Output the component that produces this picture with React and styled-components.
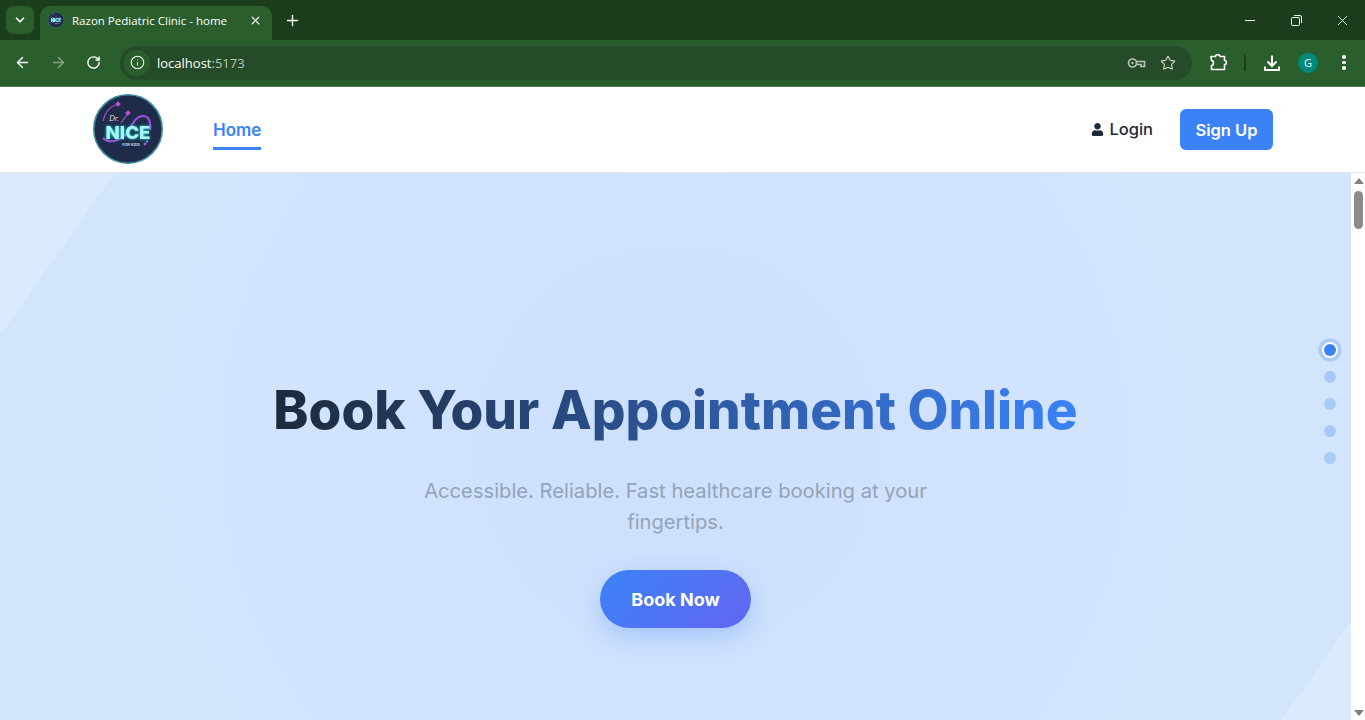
import styled, { createGlobalStyle } from "styled-components"
import { ArrowLeft, ArrowRight, RotateCw, Info, Star, X, Plus, ChevronDown } from "lucide-react"
import { FaUser } from "react-icons/fa"

const GlobalStyle = createGlobalStyle`
html, body {
    margin: 0;
    padding: 0;
    height: 720px;
    overflow: hidden;
    background: #fff;
}
* { box-sizing: border-box; }
`

function Logo({ size }) {
    return (
        <svg width={size} height={size} viewBox="0 0 70 70">
            <circle cx="35" cy="35" r="34.200" fill="#1f2c49" stroke="#3f8d9c" strokeWidth="1.600" />
            <path d="M25 10 C18 12 12 18 10 27" fill="none" stroke="#a24bd0" strokeWidth="1.200" />
            <path d="M35 19 C33 23 30 26 28 29" fill="none" stroke="#a24bd0" strokeWidth="1.200" />
            <path d="M10 44 C16 50 28 48 36 36 C41 27 44 22 50 22 C56 22 58 28 57 36" fill="none" stroke="#9c4fdc" strokeWidth="2.200" />
            <rect x="23" y="8" width="4" height="4" fill="#c04fd8" transform="rotate(45 25 10)" />
            <rect x="33" y="17" width="4" height="4" fill="#c04fd8" transform="rotate(45 35 19)" />
            <StethoText x="16" y="27" fontSize="8">Dr.</StethoText>
            <NiceText x="35" y="45" textAnchor="middle" fontSize="18" textLength="45" lengthAdjust="spacingAndGlyphs">NICE</NiceText>
            <KidsText x="38" y="51.500" textAnchor="middle" fontSize="3.800">FOR KIDS</KidsText>
            <circle cx="52" cy="50" r="1.400" fill="#c04fd8" />
            <circle cx="54" cy="47.500" r="1" fill="#35e6e6" />
        </svg>
    )
}

function KeyIcon() {
    return (
        <svg width="19" height="12" viewBox="0 0 19 12" fill="none" stroke="#b9c4b9" strokeWidth="1.600">
            <circle cx="5.500" cy="6" r="4" />
            <circle cx="5.500" cy="6" r="1.200" fill="#b9c4b9" stroke="none" />
            <path d="M9.500 4.500H17.500V9.500H14V7.500H9.500" />
        </svg>
    )
}

function ExtensionIcon() {
    return (
        <svg width="17" height="17" viewBox="0 0 17 17" fill="none" stroke="#fff" strokeWidth="1.600" strokeLinejoin="round">
            <path d="M1 2.500H5.500C5.500 0 10 0 10 2.500H14.500V6.500C17 6.500 17 10.500 14.500 10.500V15.500H1.500V11.500C4 11.500 4 6.500 1.500 6.500Z" />
        </svg>
    )
}

function DownloadIcon() {
    return (
        <svg width="16" height="16" viewBox="0 0 16 16" fill="none" stroke="#fff" strokeWidth="2">
            <path d="M8 0.500V11M3.500 6.500L8 11L12.500 6.500M1 11.500V15H15V11.500" />
        </svg>
    )
}

function MinimizeIcon() {
    return (
        <svg width="10" height="1" viewBox="0 0 10 1">
            <rect width="10" height="1" fill="#fff" />
        </svg>
    )
}

function RestoreIcon() {
    return (
        <svg width="11" height="11" viewBox="0 0 11 11" fill="none" stroke="#fff" strokeWidth="1">
            <rect x="0.500" y="2.500" width="8" height="8" rx="1.200" />
            <path d="M3 .5H9A1.500 1.500 0 0 1 10.500 2V8" />
        </svg>
    )
}

export default function App() {
    return (
        <Screen>
            <GlobalStyle />

            <TabStrip>
                <TabMenu><ChevronDown size={14} strokeWidth={3} color="#fff" /></TabMenu>
                <Tab>
                    <Logo size={16} />
                    <TabTitle>Razon Pediatric Clinic - home</TabTitle>
                    <X size={13} strokeWidth={2.200} color="#fff" />
                </Tab>
                <NewTab><Plus size={17} strokeWidth={2} color="#fff" /></NewTab>
                <WindowControls>
                    <WindowButton><MinimizeIcon /></WindowButton>
                    <WindowButton><RestoreIcon /></WindowButton>
                    <WindowButton><X size={17} strokeWidth={1.200} color="#fff" /></WindowButton>
                </WindowControls>
            </TabStrip>

            <Toolbar>
                <NavIcons>
                    <ArrowLeft size={17} strokeWidth={2} color="#fff" />
                    <ArrowRight size={17} strokeWidth={2} color="#86a587" />
                    <RotateCw size={15} strokeWidth={2.200} color="#fff" />
                </NavIcons>
                <Omnibox>
                    <SiteInfo><Info size={15} strokeWidth={1.700} color="#fff" /></SiteInfo>
                    <Url>localhost<UrlPort>:5173</UrlPort></Url>
                    <OmniActions>
                        <KeyIcon />
                        <Star size={16} strokeWidth={1.700} color="#c6d0c6" />
                    </OmniActions>
                </Omnibox>
                <ToolActions>
                    <ExtensionIcon />
                    <Divider />
                    <DownloadIcon />
                    <Avatar>G</Avatar>
                    <Dots><i /><i /><i /></Dots>
                </ToolActions>
            </Toolbar>

            <Navbar>
                <NavLeft>
                    <Logo size={70} />
                    <HomeLink>Home</HomeLink>
                </NavLeft>
                <NavRight>
                    <LoginLink><FaUser size={13} color="#1e293b" />Login</LoginLink>
                    <SignUp>Sign Up</SignUp>
                </NavRight>
            </Navbar>

            <Body>
                <Hero>
                    <Title>Book Your Appointment Online</Title>
                    <Subtitle>Accessible. Reliable. Fast healthcare booking at your fingertips.</Subtitle>
                    <BookButton>Book Now</BookButton>
                    <SectionDots>
                        <SectionDot $active />
                        <SectionDot />
                        <SectionDot />
                        <SectionDot />
                        <SectionDot />
                    </SectionDots>
                </Hero>
                <Scrollbar>
                    <ArrowUp />
                    <Thumb />
                    <ArrowDown />
                </Scrollbar>
            </Body>
        </Screen>
    )
}

const Screen = styled.div`
width: 1365px;
height: 720px;
display: flex;
flex-direction: column;
overflow: hidden;
font-family: 'Inter', 'Open Sans', sans-serif;
`

const StethoText = styled.text`
font-family: 'Liberation Serif', serif;
font-style: italic;
fill: #d7dbe6;
`

const NiceText = styled.text`
font-family: 'Inter', sans-serif;
font-weight: 800;
fill: #a6f7f2;
filter: drop-shadow(0 0 1.500px #20e0e0);
`

const KidsText = styled.text`
font-family: 'Inter', sans-serif;
font-weight: 700;
fill: #cfd6e2;
`

const TabStrip = styled.div`
height: 40px;
flex-shrink: 0;
background: #1b3d1c;
display: flex;
align-items: flex-end;
padding-left: 6px;
`

const TabMenu = styled.div`
width: 28px;
height: 28px;
margin-bottom: 6px;
border-radius: 8px;
background: #2a5e2c;
display: flex;
align-items: center;
justify-content: center;
`

const Tab = styled.div`
width: 232px;
height: 34px;
margin-left: 6px;
padding: 0 10px 6px 8px;
border-radius: 10px 10px 0 0;
background: #2a5e2c;
display: flex;
align-items: center;
gap: 8px;
`

const TabTitle = styled.span`
flex: 1;
font-family: 'Open Sans', sans-serif;
font-size: 11.500px;
color: #fff;
white-space: nowrap;
`

const NewTab = styled.div`
width: 28px;
height: 28px;
margin: 0 0 6px 6px;
display: flex;
align-items: center;
justify-content: center;
`

const WindowControls = styled.div`
margin-left: auto;
height: 40px;
display: flex;
align-items: center;
`

const WindowButton = styled.div`
width: 46px;
height: 40px;
display: flex;
align-items: center;
justify-content: center;
`

const Toolbar = styled.div`
height: 47px;
flex-shrink: 0;
background: #2a5e2c;
border-bottom: 1px solid #4b7a4c;
display: flex;
align-items: center;
padding: 0 12px 1px 14px;
`

const NavIcons = styled.div`
width: 106px;
display: flex;
align-items: center;
gap: 19px;
`

const Omnibox = styled.div`
width: 1072px;
height: 34px;
border-radius: 17px;
background: #264b29;
display: flex;
align-items: center;
padding: 0 16px 0 4px;
`

const SiteInfo = styled.div`
width: 26px;
height: 26px;
border-radius: 50%;
background: #2a5e2c;
display: flex;
align-items: center;
justify-content: center;
`

const Url = styled.span`
margin-left: 7px;
font-family: 'Open Sans', sans-serif;
font-size: 13px;
color: #fff;
`

const UrlPort = styled.span`
color: #b9c4b9;
`

const OmniActions = styled.div`
margin-left: auto;
display: flex;
align-items: center;
gap: 14px;
`

const ToolActions = styled.div`
margin-left: 18px;
display: flex;
align-items: center;
gap: 18px;
`

const Divider = styled.div`
width: 2px;
height: 16px;
margin-left: -1px;
background: #1b3d1c;
`

const Avatar = styled.div`
width: 20px;
height: 20px;
border-radius: 50%;
background: #00897b;
color: #fff;
font-family: 'Open Sans', sans-serif;
font-size: 11px;
display: flex;
align-items: center;
justify-content: center;
`

const Dots = styled.div`
margin-left: 6px;
display: flex;
flex-direction: column;
gap: 2px;

i {
    display: block;
    width: 3.500px;
    height: 3.500px;
    border-radius: 50%;
    background: #fff;
}
`

const Navbar = styled.nav`
height: 86px;
flex-shrink: 0;
background: #fff;
border-bottom: 1px solid #e5e7eb;
padding: 0 92px 1px 93px;
display: flex;
align-items: center;
justify-content: space-between;
`

const NavLeft = styled.div`
display: flex;
align-items: center;
gap: 50px;
`

const HomeLink = styled.a`
height: 41px;
padding-top: 11px;
border-bottom: 3px solid #3b82f6;
color: #3b82f6;
font-size: 17px;
font-weight: 600;
`

const NavRight = styled.div`
display: flex;
align-items: center;
gap: 27px;
`

const LoginLink = styled.a`
display: flex;
align-items: center;
gap: 5px;
color: #1e293b;
font-size: 16.500px;
font-weight: 500;
`

const SignUp = styled.button`
width: 93px;
height: 41px;
padding-top: 2px;
border: none;
border-radius: 6px;
background: #3b82f6;
color: #fff;
font-family: inherit;
font-size: 16.500px;
font-weight: 600;
`

const Body = styled.div`
flex: 1;
display: flex;
min-height: 0;
`

const Hero = styled.section`
flex: 1;
position: relative;
padding-top: 202px;
display: flex;
flex-direction: column;
align-items: center;
background:
    radial-gradient(circle at 50% 50%, rgba(196, 219, 251, 0.4), rgba(196, 219, 251, 0) 72%),
    linear-gradient(125.2deg, #dbeafe 6.6%, #d3e4fd 6.6%, #d3e4fd 96%, #dbeafe 96%);
`

const Title = styled.h1`
margin: 0;
font-size: 53px;
line-height: 70px;
font-weight: 800;
white-space: nowrap;
background: linear-gradient(90deg, #1e293b, #3b82f6);
-webkit-background-clip: text;
background-clip: text;
color: transparent;
`

const Subtitle = styled.p`
width: 540px;
margin: 30px 0 0;
font-size: 20.200px;
line-height: 31px;
text-align: center;
color: #94a3b8;
`

const BookButton = styled.button`
width: 151px;
height: 58px;
margin-top: 33px;
border: none;
border-radius: 29px;
background: linear-gradient(135deg, #3b82f6, #6366f1);
box-shadow: 0 8px 25px rgba(59, 130, 246, 0.3);
color: #fff;
font-family: inherit;
font-size: 18px;
font-weight: 700;
`

const SectionDots = styled.div`
position: absolute;
top: 171px;
right: 15px;
display: flex;
flex-direction: column;
gap: 15px;
`

const SectionDot = styled.span`
width: 12px;
height: 12px;
border-radius: 50%;
background: ${(p) => (p.$active ? "#3b82f6" : "#a9caf9")};
box-shadow: ${(p) => (p.$active ? "0 0 0 2px #fff, 0 0 0 5.500px #a9caf9" : "none")};
`

const Scrollbar = styled.div`
width: 14px;
flex-shrink: 0;
background: #fff;
display: flex;
flex-direction: column;
align-items: center;
padding: 5px 0 4px 1px;
`

const ArrowUp = styled.div`
width: 0;
height: 0;
border-left: 5px solid transparent;
border-right: 5px solid transparent;
border-bottom: 6px solid #7f7f7f;
`

const Thumb = styled.div`
width: 9px;
height: 38px;
margin-top: 7px;
border-radius: 5px;
background: #8b8b8b;
`

const ArrowDown = styled.div`
margin-top: auto;
width: 0;
height: 0;
border-left: 5px solid transparent;
border-right: 5px solid transparent;
border-top: 6px solid #7f7f7f;
`
